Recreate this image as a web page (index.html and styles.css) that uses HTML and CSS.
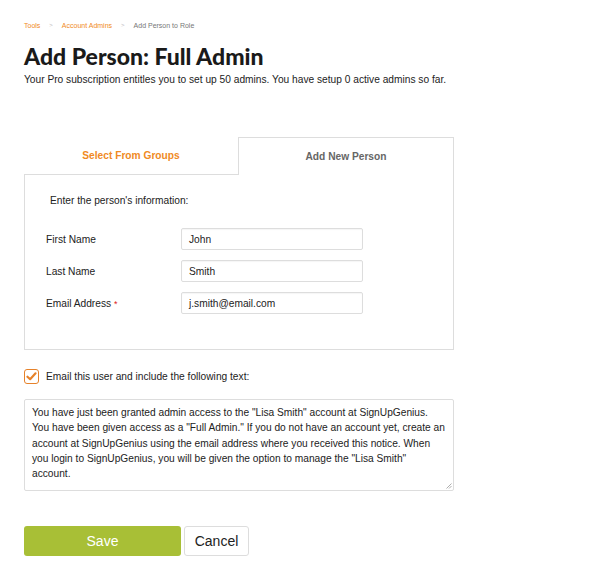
FILE: index.html
```html
<!DOCTYPE html>
<html>
<head>
<meta charset="utf-8">
<link rel="stylesheet" href="styles.css">
</head>
<body>
<div class="page">
  <nav class="crumbs">
    <a class="crumb-link">Tools</a>
    <span class="sep">&gt;</span>
    <a class="crumb-link">Account Admins</a>
    <span class="sep">&gt;</span>
    <span class="crumb-current">Add Person to Role</span>
  </nav>
  <h1 class="title">Add Person: Full Admin</h1>
  <p class="subtitle">Your Pro subscription entitles you to set up 50 admins. You have setup 0 active admins so far.</p>

  <div class="tabs">
    <div class="tab tab-inactive">Select From Groups</div>
    <div class="tab tab-active">Add New Person</div>
  </div>
  <div class="panel">
    <p class="intro">Enter the person's information:</p>
    <div class="row">
      <label class="label">First Name</label>
      <div class="input">John</div>
    </div>
    <div class="row">
      <label class="label">Last Name</label>
      <div class="input">Smith</div>
    </div>
    <div class="row">
      <label class="label">Email Address <span class="req">*</span></label>
      <div class="input">j.smith@email.com</div>
    </div>
  </div>

  <div class="check-row">
    <span class="checkbox">
      <svg width="11" height="9" viewBox="0 0 12 10"><path d="M1.5 5.2 L4.5 8 L10.5 1.5" fill="none" stroke="#e6822a" stroke-width="2.4" stroke-linecap="round" stroke-linejoin="round"/></svg>
    </span>
    <span class="check-label">Email this user and include the following text:</span>
  </div>
  <div class="textarea">You have just been granted admin access to the "Lisa Smith" account at SignUpGenius.<br>You have been given access as a "Full Admin." If you do not have an account yet, create an<br>account at SignUpGenius using the email address where you received this notice. When<br>you login to SignUpGenius, you will be given the option to manage the "Lisa Smith"<br>account.
    <svg class="grip" width="6" height="6" viewBox="0 0 6 6"><path d="M0.5 5.5 L5.5 0.5 M3 5.5 L5.5 3" stroke="#999" stroke-width="0.8"/></svg>
  </div>

  <div class="actions">
    <button class="btn btn-save">Save</button>
    <button class="btn btn-cancel">Cancel</button>
  </div>
</div>
</body>
</html>
```

FILE: styles.css
```css
* { box-sizing: border-box; }
html, body { margin: 0; padding: 0; background: #fff; }
body { font-family: "Liberation Sans", Arial, sans-serif; color: #222; }
.page { padding: 20px 0 0 24px; width: 454px; }

.crumbs { font-size: 7px; display: flex; align-items: center; gap: 9px; height: 10px; color: #999; }
.crumb-link { color: #f08a24; }
.sep { color: #bbb; font-size: 6px; }
.crumb-current { color: #777; }

.title { font-family: Lato, sans-serif; font-weight: 900; font-size: 23px; margin: 12px 0 0; line-height: 28px; color: #1a1a1a; }
.subtitle { font-size: 10.2px; margin: 3px 0 0; line-height: 14px; color: #222; white-space: nowrap; }

.tabs { display: flex; margin-top: 50px; }
.tab { flex: 1; height: 38px; display: flex; align-items: center; justify-content: center; font-size: 10.2px; font-weight: bold; }
.tab-inactive { color: #f08a24; border-bottom: 1px solid #ddd; }
.tab-active { color: #666; border: 1px solid #ddd; border-bottom: none; }

.panel { border: 1px solid #ddd; border-top: none; padding: 20px 0 35px 21px; }
.intro { font-size: 10.2px; margin: 0 0 22px 4px; color: #222; }
.row { display: flex; align-items: center; margin-bottom: 10px; }
.row:last-child { margin-bottom: 0; }
.label { width: 135px; font-size: 10.2px; color: #222; }
.req { color: #e02020; font-size: 9px; }
.input { width: 182px; height: 22px; border: 1px solid #ddd; border-radius: 2px; padding: 0 7px; font-size: 10.2px; display: flex; align-items: center; color: #222; box-shadow: inset 0 1px 1px rgba(0,0,0,0.04); }

.check-row { display: flex; align-items: center; margin-top: 18px; height: 16px; }
.checkbox { width: 15px; height: 15px; border: 1.5px solid #e6822a; border-radius: 3px; display: flex; align-items: center; justify-content: center; margin-right: 7px; }
.check-label { font-size: 10.2px; color: #222; }

.textarea { position: relative; margin-top: 15px; height: 92px; border: 1px solid #ddd; border-radius: 2px; padding: 5px 7px; font-size: 10.2px; line-height: 15.3px; color: #222; white-space: nowrap; }
.grip { position: absolute; right: 1px; bottom: 1px; }

.actions { display: flex; gap: 3px; margin-top: 35px; }
.btn { height: 30px; font-family: "Liberation Sans", Arial, sans-serif; font-size: 14px; border-radius: 3px; cursor: pointer; }
.btn-save { width: 157px; background: #a8bf36; color: #fff; border: none; }
.btn-cancel { width: 65px; background: #fff; color: #222; border: 1px solid #ddd; }
```
